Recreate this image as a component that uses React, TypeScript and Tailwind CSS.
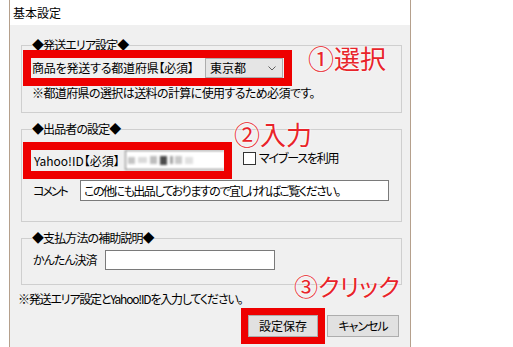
import type { ReactNode } from 'react';

const RED = 'border-[#ee0000]';

function Group({ title, className = '', children }: { title: string; className?: string; children: ReactNode }) {
  return (
    <fieldset className={`ml-[11px] w-[381px] border border-[#cfcfcf] pl-[9px] ${className}`}>
      <legend className="ml-[1px] leading-[14px] tracking-[-0.9px]">{title}</legend>
      {children}
    </fieldset>
  );
}

// red annotation frame drawn over a row
function Mark({ inset = '-inset-[8px] border-[8px]' }: { inset?: string }) {
  return <div className={`absolute ${inset} ${RED} pointer-events-none`} />;
}

function Note({ children, className }: { children: ReactNode; className: string }) {
  return (
    <div
      className={`absolute leading-none text-[#e8242a] [text-shadow:0_0_2px_#fff,0_0_2px_#fff] whitespace-nowrap ${className}`}
    >
      {children}
    </div>
  );
}

export default function App() {
  return (
    <div className="w-[513px] h-[347px] bg-white overflow-hidden font-['Noto_Sans_CJK_JP',sans-serif] [font-feature-settings:'palt'] text-[12px] leading-[14px] text-black">
      <div className="relative ml-[9px] w-[402px] h-[347px] border-x border-[#b5a08c] flex flex-col">
        {/* Title */}
        <div className="h-[25px] shrink-0 bg-white pl-[3px] pt-[6px]">基本設定</div>

        {/* Body */}
        <div className="flex-1 bg-[#f0f0f0] flex flex-col">
          <Group title="◆発送エリア設定◆" className="mt-[13px] pb-[12px]">
            <div className="relative mt-[6px] flex items-center w-[253px] h-[20px]">
              <span className="pl-[1px] w-[174px] tracking-[-0.2px]">商品を発送する都道府県【必須】</span>
              <div className="w-[78px] h-[20px] bg-[#e5e5e5] border border-[#adadad] flex items-center justify-between pl-[4px] pr-[6px]">
                <span>東京都</span>
                <svg width="8" height="5" viewBox="0 0 8 5" fill="none">
                  <path d="M0.5 0.5 L4 4 L7.5 0.5" stroke="#606060" strokeWidth="1" />
                </svg>
              </div>
              <Mark />
            </div>
            <div className="mt-[8px] pl-[1px] tracking-[-0.6px]">※都道府県の選択は送料の計算に使用するため必須です。</div>
          </Group>

          <Group title="◆出品者の設定◆" className="mt-[9px] pb-[20px]">
            <div className="mt-[14px] flex items-start">
              <div className="relative flex items-center w-[193px] h-[21px]">
                <span className="pl-[3px] w-[94px]">Yahoo!ID【必須】</span>
                <div className="flex-1 h-[20px] self-start bg-white border-l border-y border-[#7a7a7a] flex items-center pl-[2px] blur-[1.2px]">
                  <span className="w-[7px] h-[7px] bg-[#c4c4c4]" />
                  <span className="ml-[3px] w-[9px] h-[6px] bg-[#dadada]" />
                  <span className="ml-[3px] w-[7px] h-[8px] bg-[#bdbdbd]" />
                  <span className="ml-[3px] w-[7px] h-[9px] bg-[#4a4a4a]" />
                  <span className="ml-[3px] w-[3px] h-[8px] bg-[#a0a0a0]" />
                  <span className="ml-[2px] w-[7px] h-[8px] bg-[#c8c8c8]" />
                  <span className="ml-[3px] w-[8px] h-[7px] bg-[#e0e0e0]" />
                </div>
                <Mark />
              </div>
              <label className="ml-[19px] mt-[1px] flex items-center gap-[3px]">
                <span className="w-[13px] h-[13px] bg-white border border-[#333333]" />
                <span className="tracking-[-1.2px]">マイブースを利用</span>
              </label>
            </div>
            <div className="mt-[9px] flex items-center h-[21px]">
              <span className="pl-[2px] w-[49px] tracking-[-2px]">コメント</span>
              <div className="w-[309px] h-[21px] bg-white border border-[#7a7a7a] flex items-center pl-[3px] tracking-[-1.5px]">
                この他にも出品しておりますので宜しければご覧ください。
              </div>
            </div>
          </Group>

          <Group title="◆支払方法の補助説明◆" className="mt-[9px] pb-[14px]">
            <div className="mt-[5px] flex items-center h-[20px]">
              <span className="pl-[2px] w-[74px] tracking-[-1px]">かんたん決済</span>
              <div className="w-[170px] h-[20px] bg-white border border-[#7a7a7a]" />
            </div>
          </Group>

          <div className="mt-[7px] ml-[8px] tracking-[-1.2px]">※発送エリア設定とYahoo!IDを入力してください。</div>

          <div className="mt-[9px] flex justify-end gap-[9px] pr-[11px]">
            <div className="relative">
              <button className="w-[70px] h-[22px] bg-[#e1e1e1] border border-[#adadad]">設定保存</button>
              <Mark inset="-inset-[7px] border-[7px]" />
            </div>
            <button className="w-[72px] h-[22px] bg-[#e1e1e1] border border-[#adadad] tracking-[-1px]">キャンセル</button>
          </div>
        </div>

        {/* annotations */}
        <Note className="left-[298px] top-[45px] text-[26px]">①選択</Note>
        <Note className="left-[224px] top-[121px] text-[26px]">②入力</Note>
        <Note className="left-[284px] top-[274px] text-[24px]">③クリック</Note>
      </div>
    </div>
  );
}
